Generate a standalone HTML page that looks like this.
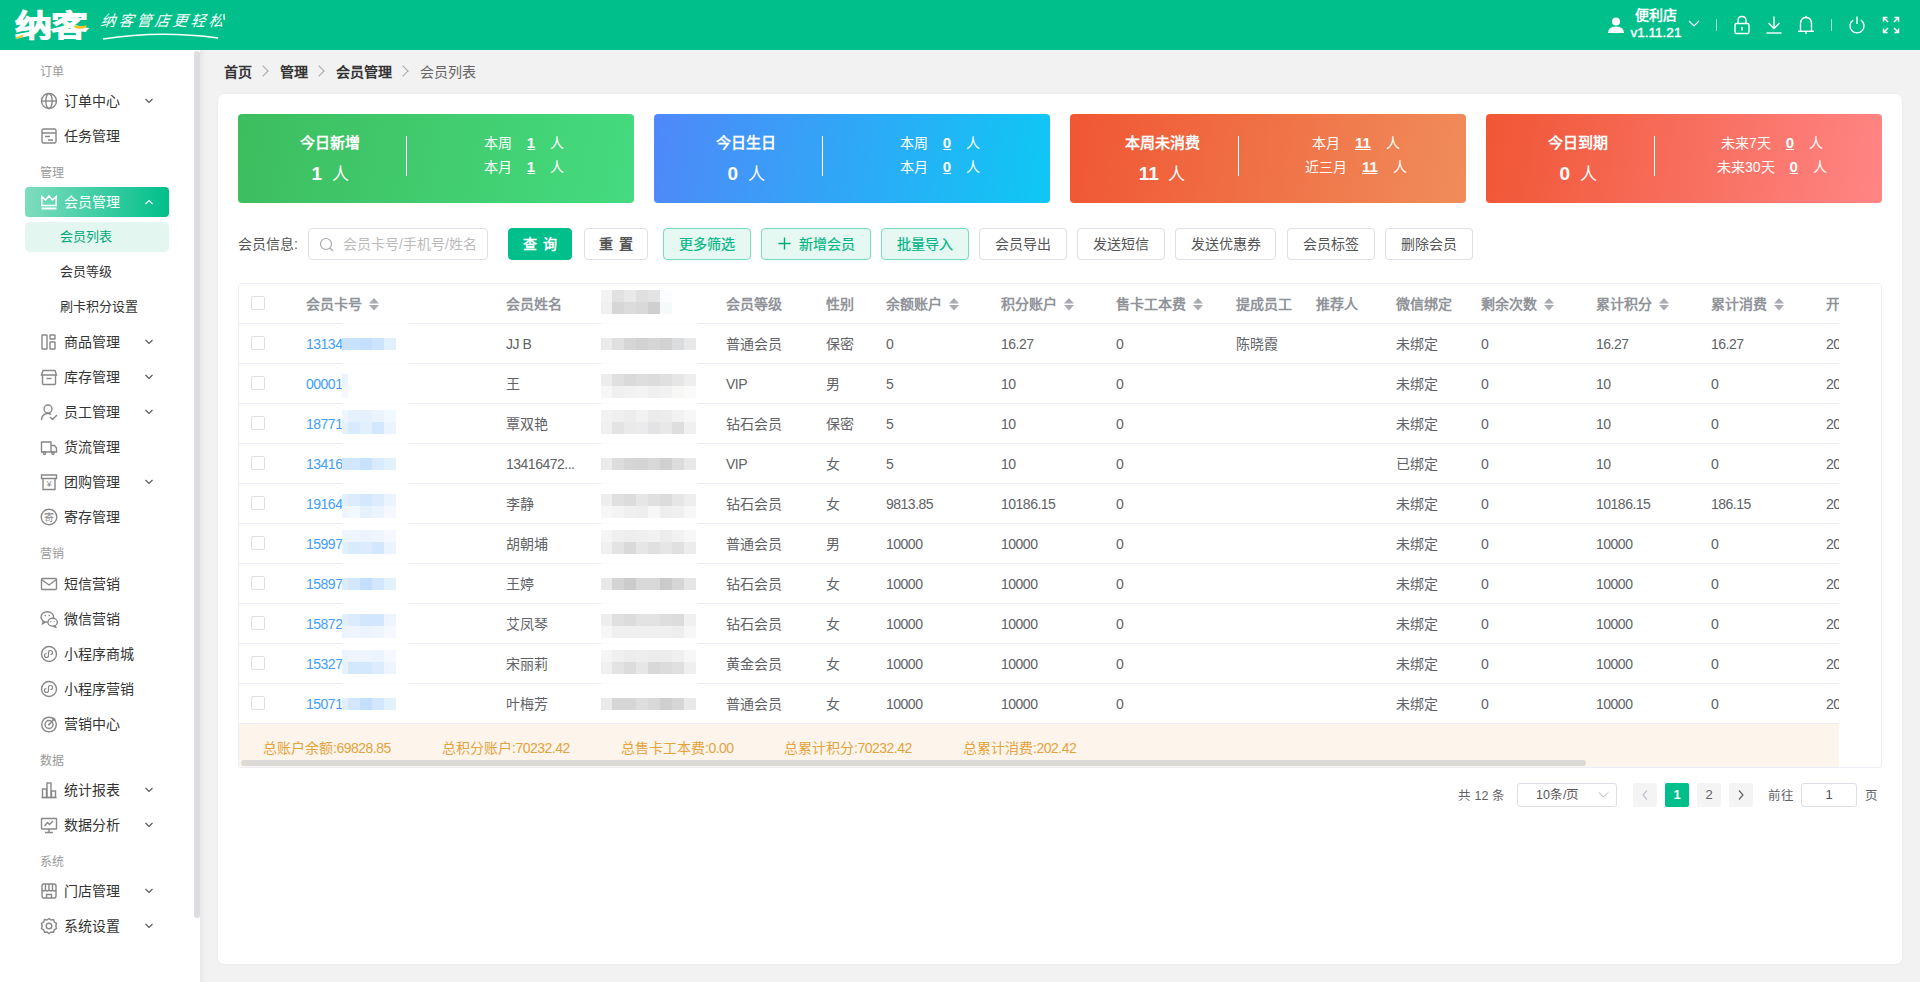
<!DOCTYPE html>
<html lang="zh-CN">
<head>
<meta charset="utf-8">
<style>
*{box-sizing:border-box;margin:0;padding:0}
html,body{width:1920px;height:982px;overflow:hidden;background:#f2f2f2;font-family:"Liberation Sans",sans-serif;font-size:14px;color:#333}
.abs{position:absolute}
#hdr{position:absolute;left:0;top:0;width:1920px;height:50px;background:#00bf8a}
#logo{position:absolute;left:15px;top:8px;font-size:35px;line-height:42px;font-weight:bold;color:#fff;letter-spacing:-1px;transform:scale(1.06,0.84);transform-origin:0 0;-webkit-text-stroke:1.2px #fff}
#slogan{position:absolute;left:101px;top:11px;font-size:15px;line-height:20px;color:#fff;font-family:"Liberation Serif",serif;font-style:italic;letter-spacing:3px;transform:skewX(-8deg)}
#mainbg{position:absolute;left:200px;top:50px;width:1720px;height:932px;background:linear-gradient(90deg,#e8e8e8,#f2f2f2 6px)}
#side{position:absolute;left:0;top:50px;width:200px;height:932px;background:#fff}
#sthumb{position:absolute;left:194px;top:51px;width:6px;height:867px;background:#dcdde0;border-radius:3px}
.grp{position:absolute;left:40px;font-size:12px;color:#999;line-height:16px}
.item{position:absolute;left:40px;width:130px;height:20px;line-height:20px;font-size:14px;color:#333}
.item .ic,#act .ic{position:absolute;left:0;top:1px;width:18px;height:18px}
.item .tx,#act .tx{position:absolute;left:24px;top:0}
.item .ar,#act .ar{position:absolute;left:104px;top:6px;width:10px;height:8px}
#act{position:absolute;left:25px;top:187px;width:144px;height:30px;border-radius:4px;background:linear-gradient(90deg,#7fdcbe,#00bf8a);color:#fff;font-size:14px;line-height:20px}
#act .ic{left:15px;top:6px}#act .tx{left:39px;top:5px}#act .ar{left:119px;top:11px}
#subact{position:absolute;left:25px;top:222px;width:144px;height:30px;border-radius:5px;background:#e3f7f0;color:#00a877;font-size:13px;line-height:30px;padding-left:35px}
.sub{position:absolute;left:60px;font-size:13px;color:#333;line-height:20px}
#bc{position:absolute;left:224px;top:62px;font-size:14px;line-height:20px;color:#333}
#bc b{font-weight:bold}
#bc .sep{display:inline-block;width:8px;height:8px;border-right:1px solid #aaa;border-top:1px solid #aaa;transform:rotate(45deg);margin:0 13px 2px 7px}
#card{position:absolute;left:218px;top:94px;width:1684px;height:870px;background:#fff;border-radius:6px;box-shadow:0 0 3px rgba(0,0,0,.06)}
.stat{position:absolute;top:114px;width:396px;height:89px;border-radius:4px;color:#fff}
.stat .t1{position:absolute;width:184px;left:0;top:19px;text-align:center;font-weight:bold;font-size:15px;line-height:20px}
.stat .t2{position:absolute;width:184px;left:0;top:49px;text-align:center;font-size:17px;line-height:22px}
.stat .t2 b{font-weight:bold;font-size:19px}
.stat .dv{position:absolute;left:168px;top:22px;width:1px;height:40px;background:#fff}
.stat .r{position:absolute;left:180px;width:212px;text-align:center;font-size:14px;line-height:20px;margin-top:1px}
.stat .r u{font-weight:bold;margin:0 15px;font-size:15px}
.btn{position:absolute;top:228px;height:32px;border:1px solid #dcdfe6;border-radius:4px;background:#fff;font-size:14px;line-height:30px;text-align:center;color:#555}
.btn.pri{background:#00bf8a;border-color:#00bf8a;color:#fff;font-weight:bold;letter-spacing:6px;text-indent:6px}
.btn.rs{font-weight:bold;letter-spacing:6px;text-indent:6px}
.btn.lt{background:#e6f8f2;border-color:#78dcc0;color:#00b585;-webkit-text-stroke:0.2px #00b585;line-height:30px}
.btn .plus{margin-right:8px;vertical-align:-1px}
#tbl{position:absolute;left:238px;top:283px;width:1644px;height:485px;border:1px solid #ebeef5;border-radius:3px;overflow:hidden;background:#fff}
.row{position:absolute;left:0;width:1600px;height:40px;border-bottom:1px solid #ebeef5;font-size:14px;color:#606266;overflow:hidden}
em.n{font-style:normal;letter-spacing:-0.5px}
.row span{position:absolute;top:1px;line-height:39px;white-space:nowrap}
.row span.lk{color:#409eff}
.hrow span{font-weight:bold;color:#909399}
.so{margin-left:7px;vertical-align:-2px}
.cb{position:absolute;left:12px;top:12px;width:14px;height:14px;border:1px solid #dcdfe6;border-radius:2px;background:#fff}
.blur{position:absolute}
#sum{position:absolute;left:0;top:440px;width:1600px;height:44px;background:#fdf5ec}
#sum span{position:absolute;top:14px;line-height:20px;font-size:14px;color:#e6a23c;white-space:nowrap}
#hscroll{position:absolute;left:2px;top:476px;width:1345px;height:6px;border-radius:3px;background:#dcdad6}
.pg{position:absolute;font-size:12.5px;line-height:18px;color:#606266}
.pgb{position:absolute;top:783px;width:24px;height:24px;border-radius:2px;background:#f4f4f5;text-align:center;line-height:24px;font-size:13px;color:#606266}
.pgb.act{background:#00bf8a;color:#fff;font-weight:bold}

</style>
</head>
<body>
<div id="hdr">
<div id="logo">纳客</div>
<div id="slogan">纳客管店更轻松</div>
<svg class="abs" style="left:14px;top:22px" width="74" height="18" viewBox="0 0 74 18"><path d="M1.5 15.5 Q6 14 9.5 12.5 L8.5 15 Q5 16.5 1.5 16.5 Z" fill="#f5c21a"/><path d="M60 3 Q66 5.5 72.5 3 L72 5.5 Q66 8 60.5 5.5 Z" fill="#f5c21a"/></svg>
<svg class="abs" style="left:100px;top:30px" width="130" height="12" viewBox="0 0 130 12"><path d="M3 9 Q60 0 118 8" stroke="#fff" stroke-width="1.3" fill="none"/></svg>
<svg class="abs" style="left:1607px;top:16px" width="18" height="18" viewBox="0 0 18 18"><circle cx="9" cy="5.5" r="4" fill="#fff"/><path d="M1 17 Q1 10.5 9 10.5 Q17 10.5 17 17 Z" fill="#fff"/></svg>
<div class="abs" style="left:1628px;top:7px;width:56px;text-align:center;color:#fff;font-size:14px;line-height:17px;font-weight:bold">便利店</div><div class="abs" style="left:1628px;top:25px;width:56px;text-align:center;color:#fff;font-size:13.5px;line-height:16px;-webkit-text-stroke:0.4px #fff">v1.11.21</div>
<svg class="abs" style="left:1688px;top:20px" width="12" height="8" viewBox="0 0 12 8"><path d="M1 1 L6 6 L11 1" stroke="#fff" stroke-width="1.2" fill="none"/></svg>
<div class="abs" style="left:1716px;top:19px;width:1px;height:12px;background:rgba(255,255,255,.6)"></div>
<div class="abs" style="left:1831px;top:19px;width:1px;height:12px;background:rgba(255,255,255,.6)"></div>
<svg class="abs" style="left:1733px;top:15px" width="18" height="20" viewBox="0 0 18 20"><rect x="2" y="8.5" width="14" height="10" rx="1.5" stroke="#fff" stroke-width="1.4" fill="none"/><path d="M5 8.5 V5.5 Q5 1.5 9 1.5 Q13 1.5 13 5.5 V8.5" stroke="#fff" stroke-width="1.4" fill="none"/><path d="M9 12 V15.5" stroke="#fff" stroke-width="1.6"/></svg>
<svg class="abs" style="left:1765px;top:15px" width="18" height="20" viewBox="0 0 18 20"><path d="M9 1.5 V13 M3.5 8 L9 13.5 L14.5 8" stroke="#fff" stroke-width="1.4" fill="none"/><path d="M1.5 18 H16.5" stroke="#fff" stroke-width="1.4"/></svg>
<svg class="abs" style="left:1797px;top:15px" width="18" height="20" viewBox="0 0 18 20"><path d="M3.5 16 V9 Q3.5 2.5 9 2.5 Q14.5 2.5 14.5 9 V16" stroke="#fff" stroke-width="1.4" fill="none"/><path d="M1 16.3 H17" stroke="#fff" stroke-width="1.4"/><circle cx="9" cy="1.8" r="1" fill="#fff"/><path d="M8 18 H10" stroke="#fff" stroke-width="1.6"/></svg>
<svg class="abs" style="left:1848px;top:15px" width="18" height="20" viewBox="0 0 18 20"><path d="M5.2 5 A7 7 0 1 0 12.8 5" stroke="#fff" stroke-width="1.4" fill="none"/><path d="M9 1.5 V9" stroke="#fff" stroke-width="1.4"/></svg>
<svg class="abs" style="left:1882px;top:16px" width="18" height="18" viewBox="0 0 18 18"><g stroke="#fff" stroke-width="1.5" fill="none"><path d="M1.5 5.5 V1.5 H5.5 M1.5 1.5 L6 6"/><path d="M16.5 5.5 V1.5 H12.5 M16.5 1.5 L12 6"/><path d="M1.5 12.5 V16.5 H5.5 M1.5 16.5 L6 12"/><path d="M16.5 12.5 V16.5 H12.5 M16.5 16.5 L12 12"/></g></svg>
</div>
<div id="mainbg"></div><div id="side"></div><div id="sthumb"></div>
<div class="grp" style="top:64px">订单</div>
<div class="item" style="top:91px"><svg class="ic" viewBox="0 0 18 18"><circle cx="9" cy="9" r="7.5" stroke="#888" stroke-width="1.4" fill="none"/><ellipse cx="9" cy="9" rx="3.2" ry="7.5" stroke="#888" stroke-width="1.4" fill="none"/><path d="M1.5 9 H16.5" stroke="#888" stroke-width="1.4" fill="none"/></svg><span class="tx">订单中心</span><svg class="ar" viewBox="0 0 10 8"><path d="M1.5 2 L5 5.5 L8.5 2" stroke="#555" stroke-width="1.1" fill="none"/></svg></div>
<div class="item" style="top:126px"><svg class="ic" viewBox="0 0 18 18"><rect x="2" y="2" width="14" height="14" rx="1.5" stroke="#888" stroke-width="1.4" fill="none"/><path d="M2 6 H16 M5 9.5 H10 M8 13 H13" stroke="#888" stroke-width="1.4" fill="none"/></svg><span class="tx">任务管理</span></div>
<div class="grp" style="top:165px">管理</div>
<div id="act"><svg class="ic" viewBox="0 0 18 18"><path d="M1.8 3.5 V12.5 H16.2 V3.5 L12.5 7 L9 3 L5.5 7 Z" stroke="#fff" stroke-width="1.5" fill="none" stroke-linejoin="miter"/><path d="M1.5 15.5 H16.5" stroke="#fff" stroke-width="2"/></svg><span class="tx">会员管理</span><svg class="ar" viewBox="0 0 10 8"><path d="M1.5 6 L5 2.5 L8.5 6" stroke="#fff" stroke-width="1.1" fill="none"/></svg></div>
<div id="subact">会员列表</div>
<div class="sub" style="top:262px">会员等级</div>
<div class="sub" style="top:297px">刷卡积分设置</div>
<div class="item" style="top:332px"><svg class="ic" viewBox="0 0 18 18"><rect x="2" y="2" width="5" height="14" rx="0.5" stroke="#888" stroke-width="1.4" fill="none"/><rect x="10" y="2" width="5" height="4" rx="0.5" stroke="#888" stroke-width="1.4" fill="none"/><rect x="10" y="9" width="5" height="7" rx="0.5" stroke="#888" stroke-width="1.4" fill="none"/></svg><span class="tx">商品管理</span><svg class="ar" viewBox="0 0 10 8"><path d="M1.5 2 L5 5.5 L8.5 2" stroke="#555" stroke-width="1.1" fill="none"/></svg></div>
<div class="item" style="top:367px"><svg class="ic" viewBox="0 0 18 18"><path d="M2.5 7 V15.5 Q2.5 16.5 3.5 16.5 H14.5 Q15.5 16.5 15.5 15.5 V7" stroke="#888" stroke-width="1.4" fill="none"/><path d="M3 2.5 H15 L16.5 7 H1.5 Z" stroke="#888" stroke-width="1.4" fill="none"/><path d="M6.5 10.5 H11.5" stroke="#888" stroke-width="1.4" fill="none"/></svg><span class="tx">库存管理</span><svg class="ar" viewBox="0 0 10 8"><path d="M1.5 2 L5 5.5 L8.5 2" stroke="#555" stroke-width="1.1" fill="none"/></svg></div>
<div class="item" style="top:402px"><svg class="ic" viewBox="0 0 18 18"><circle cx="8" cy="6" r="4" stroke="#888" stroke-width="1.4" fill="none"/><path d="M1.5 17 Q2 10.5 8 10.5 Q10 10.5 11 11.5" stroke="#888" stroke-width="1.4" fill="none"/><path d="M10 14 L12.5 16.5 L17 12" stroke="#888" stroke-width="1.4" fill="none"/></svg><span class="tx">员工管理</span><svg class="ar" viewBox="0 0 10 8"><path d="M1.5 2 L5 5.5 L8.5 2" stroke="#555" stroke-width="1.1" fill="none"/></svg></div>
<div class="item" style="top:437px"><svg class="ic" viewBox="0 0 18 18"><path d="M1.5 4 H11 V14 H1.5 Z" stroke="#888" stroke-width="1.4" fill="none"/><path d="M11 7.5 H14.5 L16.5 10 V14 H11" stroke="#888" stroke-width="1.4" fill="none"/><circle cx="4.5" cy="15" r="1.2" stroke="#888" stroke-width="1.4" fill="none"/><circle cx="13" cy="15" r="1.2" stroke="#888" stroke-width="1.4" fill="none"/></svg><span class="tx">货流管理</span></div>
<div class="item" style="top:472px"><svg class="ic" viewBox="0 0 18 18"><path d="M1.5 2 H16.5 V5.5 H1.5 Z" stroke="#888" stroke-width="1.4" fill="none"/><path d="M3 5.5 V16.5 H15 V5.5" stroke="#888" stroke-width="1.4" fill="none"/><text x="9" y="14" text-anchor="middle" font-size="8.5" fill="#888">¥</text></svg><span class="tx">团购管理</span><svg class="ar" viewBox="0 0 10 8"><path d="M1.5 2 L5 5.5 L8.5 2" stroke="#555" stroke-width="1.1" fill="none"/></svg></div>
<div class="item" style="top:507px"><svg class="ic" viewBox="0 0 18 18"><circle cx="9" cy="9" r="7.8" stroke="#888" stroke-width="1.4" fill="none"/><text x="9" y="12.6" text-anchor="middle" font-size="10" fill="#888">寄</text></svg><span class="tx">寄存管理</span></div>
<div class="grp" style="top:546px">营销</div>
<div class="item" style="top:574px"><svg class="ic" viewBox="0 0 18 18"><rect x="1.5" y="3.5" width="15" height="11" rx="1" stroke="#888" stroke-width="1.4" fill="none"/><path d="M1.5 4.5 L9 10 L16.5 4.5" stroke="#888" stroke-width="1.4" fill="none"/></svg><span class="tx">短信营销</span></div>
<div class="item" style="top:609px"><svg class="ic" viewBox="0 0 18 18"><ellipse cx="7.3" cy="7" rx="6.3" ry="5.2" stroke="#888" stroke-width="1.4" fill="none"/><path d="M3.3 11 L2.6 13.8 L5.6 12" stroke="#888" stroke-width="1.4" fill="none"/><circle cx="5.2" cy="5.6" r="0.8" fill="#888"/><circle cx="9.2" cy="5.6" r="0.8" fill="#888"/><ellipse cx="12.6" cy="12.2" rx="4.7" ry="3.9" fill="#fff" stroke="#888" stroke-width="1.4"/><path d="M14.8 15.6 L15.8 17.3 L12.8 16.1" stroke="#888" stroke-width="1.4" fill="none"/><circle cx="11" cy="11.6" r="0.7" fill="#888"/><circle cx="14.2" cy="11.6" r="0.7" fill="#888"/></svg><span class="tx">微信营销</span></div>
<div class="item" style="top:644px"><svg class="ic" viewBox="0 0 18 18"><circle cx="9" cy="9" r="7.5" stroke="#888" stroke-width="1.4" fill="none"/><path d="M6.5 12.5 Q4.5 12.5 4.5 10.5 Q4.5 8.5 6.5 8.5 M6.5 12.5 Q8.5 12.5 8.5 10.5 V7.5 Q8.5 5.5 10.5 5.5 Q12.5 5.5 12.5 7.5 Q12.5 9.5 10.5 9.5" stroke="#888" stroke-width="1.2" fill="none"/></svg><span class="tx">小程序商城</span></div>
<div class="item" style="top:679px"><svg class="ic" viewBox="0 0 18 18"><circle cx="9" cy="9" r="7.5" stroke="#888" stroke-width="1.4" fill="none"/><path d="M6.5 12.5 Q4.5 12.5 4.5 10.5 Q4.5 8.5 6.5 8.5 M6.5 12.5 Q8.5 12.5 8.5 10.5 V7.5 Q8.5 5.5 10.5 5.5 Q12.5 5.5 12.5 7.5 Q12.5 9.5 10.5 9.5" stroke="#888" stroke-width="1.2" fill="none"/></svg><span class="tx">小程序营销</span></div>
<div class="item" style="top:714px"><svg class="ic" viewBox="0 0 18 18"><circle cx="9" cy="9.5" r="7.3" stroke="#888" stroke-width="1.4" fill="none"/><circle cx="9" cy="9.5" r="4" stroke="#888" stroke-width="1.4" fill="none"/><circle cx="9" cy="9.5" r="1" fill="#888"/><path d="M9 9.5 L15 3.5 M13 2.5 V5 H15.5" stroke="#888" stroke-width="1.4" fill="none"/></svg><span class="tx">营销中心</span></div>
<div class="grp" style="top:753px">数据</div>
<div class="item" style="top:780px"><svg class="ic" viewBox="0 0 18 18"><path d="M1.5 16.5 H16.5" stroke="#888" stroke-width="1.4" fill="none"/><rect x="2.5" y="8" width="4" height="8.5" stroke="#888" stroke-width="1.4" fill="none"/><rect x="7" y="2" width="4" height="14.5" stroke="#888" stroke-width="1.4" fill="none"/><rect x="11.5" y="10" width="4" height="6.5" stroke="#888" stroke-width="1.4" fill="none"/></svg><span class="tx">统计报表</span><svg class="ar" viewBox="0 0 10 8"><path d="M1.5 2 L5 5.5 L8.5 2" stroke="#555" stroke-width="1.1" fill="none"/></svg></div>
<div class="item" style="top:815px"><svg class="ic" viewBox="0 0 18 18"><rect x="1.5" y="2.5" width="15" height="10.5" rx="0.5" stroke="#888" stroke-width="1.4" fill="none"/><path d="M9 13 V16.5 M5 16.5 H13 M4.5 10 L7.5 6.5 L9.5 8.5 L13 5" stroke="#888" stroke-width="1.4" fill="none"/></svg><span class="tx">数据分析</span><svg class="ar" viewBox="0 0 10 8"><path d="M1.5 2 L5 5.5 L8.5 2" stroke="#555" stroke-width="1.1" fill="none"/></svg></div>
<div class="grp" style="top:854px">系统</div>
<div class="item" style="top:881px"><svg class="ic" viewBox="0 0 18 18"><rect x="2" y="2" width="14" height="14" rx="2" stroke="#888" stroke-width="1.4" fill="none"/><path d="M2 8 Q3.75 10 5.5 8 Q7.25 10 9 8 Q10.75 10 12.5 8 Q14.25 10 16 8 M5.5 2 V8 M9 2 V8 M12.5 2 V8 M6.5 16 V12.5 H11.5 V16" stroke="#888" stroke-width="1.4" fill="none"/></svg><span class="tx">门店管理</span><svg class="ar" viewBox="0 0 10 8"><path d="M1.5 2 L5 5.5 L8.5 2" stroke="#555" stroke-width="1.1" fill="none"/></svg></div>
<div class="item" style="top:916px"><svg class="ic" viewBox="0 0 18 18"><path d="M9 1.5 L11 3 L13.5 2.6 L14.3 5 L16.5 6.3 L15.8 8.8 L16.5 11.5 L14.3 12.8 L13.5 15.3 L11 15 L9 16.5 L7 15 L4.5 15.3 L3.7 12.8 L1.5 11.5 L2.2 9 L1.5 6.3 L3.7 5 L4.5 2.6 L7 3 Z" stroke="#888" stroke-width="1.4" fill="none"/><circle cx="9" cy="9" r="2.8" stroke="#888" stroke-width="1.4" fill="none"/></svg><span class="tx">系统设置</span><svg class="ar" viewBox="0 0 10 8"><path d="M1.5 2 L5 5.5 L8.5 2" stroke="#555" stroke-width="1.1" fill="none"/></svg></div>
<div id="bc"><b>首页</b><i class="sep"></i><b>管理</b><i class="sep"></i><b>会员管理</b><i class="sep"></i><span style="color:#666">会员列表</span></div>
<div id="card"></div>
<div class="stat" style="left:238px;background:linear-gradient(100deg,#3dbd5e,#45db80)"><div class="t1">今日新增</div><div class="t2"><b>1</b>&nbsp;&nbsp;人</div><div class="dv"></div>
<div class="r" style="top:18px">本周<u>1</u>人</div>
<div class="r" style="top:42px">本月<u>1</u>人</div>
</div>
<div class="stat" style="left:654px;background:linear-gradient(100deg,#5088f9,#0ec8f4)"><div class="t1">今日生日</div><div class="t2"><b>0</b>&nbsp;&nbsp;人</div><div class="dv"></div>
<div class="r" style="top:18px">本周<u>0</u>人</div>
<div class="r" style="top:42px">本月<u>0</u>人</div>
</div>
<div class="stat" style="left:1070px;background:linear-gradient(100deg,#f05634,#f08d5a)"><div class="t1">本周未消费</div><div class="t2"><b>11</b>&nbsp;&nbsp;人</div><div class="dv"></div>
<div class="r" style="top:18px">本月<u>11</u>人</div>
<div class="r" style="top:42px">近三月<u>11</u>人</div>
</div>
<div class="stat" style="left:1486px;background:linear-gradient(100deg,#f05634,#ff8585)"><div class="t1">今日到期</div><div class="t2"><b>0</b>&nbsp;&nbsp;人</div><div class="dv"></div>
<div class="r" style="top:18px">未来7天<u>0</u>人</div>
<div class="r" style="top:42px">未来30天<u>0</u>人</div>
</div>
<div class="abs" style="left:238px;top:234px;font-size:14px;line-height:20px;color:#555">会员信息:</div>
<div class="abs" style="left:308px;top:228px;width:180px;height:32px;border:1px solid #dcdfe6;border-radius:4px"><svg class="abs" style="left:10px;top:8px" width="16" height="16" viewBox="0 0 16 16"><circle cx="7" cy="7" r="5.5" stroke="#aaa" stroke-width="1.2" fill="none"/><path d="M11 11 L14 14" stroke="#aaa" stroke-width="1.2"/></svg><span class="abs" style="left:34px;top:5px;line-height:20px;color:#bbb;font-size:14px;white-space:nowrap">会员卡号/手机号/姓名</span></div>
<div class="btn pri" style="left:508px;width:64px">查询</div>
<div class="btn rs" style="left:584px;width:64px">重置</div>
<div class="btn lt" style="left:663px;width:88px">更多筛选</div>
<div class="btn lt" style="left:761px;width:110px"><svg class="plus" width="13" height="13" viewBox="0 0 13 13"><path d="M6.5 0.5 V12.5 M0.5 6.5 H12.5" stroke="#00a877" stroke-width="1.4"/></svg>新增会员</div>
<div class="btn lt" style="left:881px;width:88px">批量导入</div>
<div class="btn " style="left:979px;width:88px">会员导出</div>
<div class="btn " style="left:1077px;width:88px">发送短信</div>
<div class="btn " style="left:1175px;width:101px">发送优惠券</div>
<div class="btn " style="left:1287px;width:88px">会员标签</div>
<div class="btn " style="left:1385px;width:88px">删除会员</div>
<div id="tbl">
<div class="row hrow" style="top:0"><i class="cb"></i>
<span style="left:67px">会员卡号<svg class="so" width="10" height="13" viewBox="0 0 10 13"><path d="M5 0 L10 5.6 H0 Z M0 7 H10 L5 12.6 Z" fill="#a8abb2"/></svg></span>
<span style="left:267px">会员姓名</span>
<span style="left:487px">会员等级</span>
<span style="left:587px">性别</span>
<span style="left:647px">余额账户<svg class="so" width="10" height="13" viewBox="0 0 10 13"><path d="M5 0 L10 5.6 H0 Z M0 7 H10 L5 12.6 Z" fill="#a8abb2"/></svg></span>
<span style="left:762px">积分账户<svg class="so" width="10" height="13" viewBox="0 0 10 13"><path d="M5 0 L10 5.6 H0 Z M0 7 H10 L5 12.6 Z" fill="#a8abb2"/></svg></span>
<span style="left:877px">售卡工本费<svg class="so" width="10" height="13" viewBox="0 0 10 13"><path d="M5 0 L10 5.6 H0 Z M0 7 H10 L5 12.6 Z" fill="#a8abb2"/></svg></span>
<span style="left:997px">提成员工</span>
<span style="left:1077px">推荐人</span>
<span style="left:1157px">微信绑定</span>
<span style="left:1242px">剩余次数<svg class="so" width="10" height="13" viewBox="0 0 10 13"><path d="M5 0 L10 5.6 H0 Z M0 7 H10 L5 12.6 Z" fill="#a8abb2"/></svg></span>
<span style="left:1357px">累计积分<svg class="so" width="10" height="13" viewBox="0 0 10 13"><path d="M5 0 L10 5.6 H0 Z M0 7 H10 L5 12.6 Z" fill="#a8abb2"/></svg></span>
<span style="left:1472px">累计消费<svg class="so" width="10" height="13" viewBox="0 0 10 13"><path d="M5 0 L10 5.6 H0 Z M0 7 H10 L5 12.6 Z" fill="#a8abb2"/></svg></span>
<span style="left:1587px">开</span>
</div>
<div class="row" style="top:40px"><i class="cb"></i>
<span class="lk" style="left:67px"><em class="n">13134</em></span>
<span style="left:267px"><em class="n">JJ B</em></span>
<span style="left:487px">普通会员</span>
<span style="left:587px">保密</span>
<span style="left:647px"><em class="n">0</em></span>
<span style="left:762px"><em class="n">16.27</em></span>
<span style="left:877px"><em class="n">0</em></span>
<span style="left:997px">陈晓霞</span>
<span style="left:1157px">未绑定</span>
<span style="left:1242px"><em class="n">0</em></span>
<span style="left:1357px"><em class="n">16.27</em></span>
<span style="left:1472px"><em class="n">16.27</em></span>
<span style="left:1587px"><em class="n">20</em></span>
</div>
<div class="row" style="top:80px"><i class="cb"></i>
<span class="lk" style="left:67px"><em class="n">00001</em></span>
<span style="left:267px">王</span>
<span style="left:487px"><em class="n">VIP</em></span>
<span style="left:587px">男</span>
<span style="left:647px"><em class="n">5</em></span>
<span style="left:762px"><em class="n">10</em></span>
<span style="left:877px"><em class="n">0</em></span>
<span style="left:1157px">未绑定</span>
<span style="left:1242px"><em class="n">0</em></span>
<span style="left:1357px"><em class="n">10</em></span>
<span style="left:1472px"><em class="n">0</em></span>
<span style="left:1587px"><em class="n">20</em></span>
</div>
<div class="row" style="top:120px"><i class="cb"></i>
<span class="lk" style="left:67px"><em class="n">18771</em></span>
<span style="left:267px">覃双艳</span>
<span style="left:487px">钻石会员</span>
<span style="left:587px">保密</span>
<span style="left:647px"><em class="n">5</em></span>
<span style="left:762px"><em class="n">10</em></span>
<span style="left:877px"><em class="n">0</em></span>
<span style="left:1157px">未绑定</span>
<span style="left:1242px"><em class="n">0</em></span>
<span style="left:1357px"><em class="n">10</em></span>
<span style="left:1472px"><em class="n">0</em></span>
<span style="left:1587px"><em class="n">20</em></span>
</div>
<div class="row" style="top:160px"><i class="cb"></i>
<span class="lk" style="left:67px"><em class="n">13416</em></span>
<span style="left:267px"><em class="n">13416472...</em></span>
<span style="left:487px"><em class="n">VIP</em></span>
<span style="left:587px">女</span>
<span style="left:647px"><em class="n">5</em></span>
<span style="left:762px"><em class="n">10</em></span>
<span style="left:877px"><em class="n">0</em></span>
<span style="left:1157px">已绑定</span>
<span style="left:1242px"><em class="n">0</em></span>
<span style="left:1357px"><em class="n">10</em></span>
<span style="left:1472px"><em class="n">0</em></span>
<span style="left:1587px"><em class="n">20</em></span>
</div>
<div class="row" style="top:200px"><i class="cb"></i>
<span class="lk" style="left:67px"><em class="n">19164</em></span>
<span style="left:267px">李静</span>
<span style="left:487px">钻石会员</span>
<span style="left:587px">女</span>
<span style="left:647px"><em class="n">9813.85</em></span>
<span style="left:762px"><em class="n">10186.15</em></span>
<span style="left:877px"><em class="n">0</em></span>
<span style="left:1157px">未绑定</span>
<span style="left:1242px"><em class="n">0</em></span>
<span style="left:1357px"><em class="n">10186.15</em></span>
<span style="left:1472px"><em class="n">186.15</em></span>
<span style="left:1587px"><em class="n">20</em></span>
</div>
<div class="row" style="top:240px"><i class="cb"></i>
<span class="lk" style="left:67px"><em class="n">15997</em></span>
<span style="left:267px">胡朝埔</span>
<span style="left:487px">普通会员</span>
<span style="left:587px">男</span>
<span style="left:647px"><em class="n">10000</em></span>
<span style="left:762px"><em class="n">10000</em></span>
<span style="left:877px"><em class="n">0</em></span>
<span style="left:1157px">未绑定</span>
<span style="left:1242px"><em class="n">0</em></span>
<span style="left:1357px"><em class="n">10000</em></span>
<span style="left:1472px"><em class="n">0</em></span>
<span style="left:1587px"><em class="n">20</em></span>
</div>
<div class="row" style="top:280px"><i class="cb"></i>
<span class="lk" style="left:67px"><em class="n">15897</em></span>
<span style="left:267px">王婷</span>
<span style="left:487px">钻石会员</span>
<span style="left:587px">女</span>
<span style="left:647px"><em class="n">10000</em></span>
<span style="left:762px"><em class="n">10000</em></span>
<span style="left:877px"><em class="n">0</em></span>
<span style="left:1157px">未绑定</span>
<span style="left:1242px"><em class="n">0</em></span>
<span style="left:1357px"><em class="n">10000</em></span>
<span style="left:1472px"><em class="n">0</em></span>
<span style="left:1587px"><em class="n">20</em></span>
</div>
<div class="row" style="top:320px"><i class="cb"></i>
<span class="lk" style="left:67px"><em class="n">15872</em></span>
<span style="left:267px">艾凤琴</span>
<span style="left:487px">钻石会员</span>
<span style="left:587px">女</span>
<span style="left:647px"><em class="n">10000</em></span>
<span style="left:762px"><em class="n">10000</em></span>
<span style="left:877px"><em class="n">0</em></span>
<span style="left:1157px">未绑定</span>
<span style="left:1242px"><em class="n">0</em></span>
<span style="left:1357px"><em class="n">10000</em></span>
<span style="left:1472px"><em class="n">0</em></span>
<span style="left:1587px"><em class="n">20</em></span>
</div>
<div class="row" style="top:360px"><i class="cb"></i>
<span class="lk" style="left:67px"><em class="n">15327</em></span>
<span style="left:267px">宋丽莉</span>
<span style="left:487px">黄金会员</span>
<span style="left:587px">女</span>
<span style="left:647px"><em class="n">10000</em></span>
<span style="left:762px"><em class="n">10000</em></span>
<span style="left:877px"><em class="n">0</em></span>
<span style="left:1157px">未绑定</span>
<span style="left:1242px"><em class="n">0</em></span>
<span style="left:1357px"><em class="n">10000</em></span>
<span style="left:1472px"><em class="n">0</em></span>
<span style="left:1587px"><em class="n">20</em></span>
</div>
<div class="row" style="top:400px"><i class="cb"></i>
<span class="lk" style="left:67px"><em class="n">15071</em></span>
<span style="left:267px">叶梅芳</span>
<span style="left:487px">普通会员</span>
<span style="left:587px">女</span>
<span style="left:647px"><em class="n">10000</em></span>
<span style="left:762px"><em class="n">10000</em></span>
<span style="left:877px"><em class="n">0</em></span>
<span style="left:1157px">未绑定</span>
<span style="left:1242px"><em class="n">0</em></span>
<span style="left:1357px"><em class="n">10000</em></span>
<span style="left:1472px"><em class="n">0</em></span>
<span style="left:1587px"><em class="n">20</em></span>
</div>
<div class="blur" style="left:103px;top:39px;width:66px;height:1px;background:#fcfcfd"></div>
<div class="blur" style="left:362px;top:39px;width:97px;height:1px;background:#fcfcfd"></div>
<div class="blur" style="left:103px;top:79px;width:66px;height:1px;background:#fcfcfd"></div>
<div class="blur" style="left:362px;top:79px;width:97px;height:1px;background:#fcfcfd"></div>
<div class="blur" style="left:103px;top:119px;width:66px;height:1px;background:#fcfcfd"></div>
<div class="blur" style="left:362px;top:119px;width:97px;height:1px;background:#fcfcfd"></div>
<div class="blur" style="left:103px;top:159px;width:66px;height:1px;background:#fcfcfd"></div>
<div class="blur" style="left:362px;top:159px;width:97px;height:1px;background:#fcfcfd"></div>
<div class="blur" style="left:103px;top:199px;width:66px;height:1px;background:#fcfcfd"></div>
<div class="blur" style="left:362px;top:199px;width:97px;height:1px;background:#fcfcfd"></div>
<div class="blur" style="left:103px;top:239px;width:66px;height:1px;background:#fcfcfd"></div>
<div class="blur" style="left:362px;top:239px;width:97px;height:1px;background:#fcfcfd"></div>
<div class="blur" style="left:103px;top:279px;width:66px;height:1px;background:#fcfcfd"></div>
<div class="blur" style="left:362px;top:279px;width:97px;height:1px;background:#fcfcfd"></div>
<div class="blur" style="left:103px;top:319px;width:66px;height:1px;background:#fcfcfd"></div>
<div class="blur" style="left:362px;top:319px;width:97px;height:1px;background:#fcfcfd"></div>
<div class="blur" style="left:103px;top:359px;width:66px;height:1px;background:#fcfcfd"></div>
<div class="blur" style="left:362px;top:359px;width:97px;height:1px;background:#fcfcfd"></div>
<div class="blur" style="left:103px;top:399px;width:66px;height:1px;background:#fcfcfd"></div>
<div class="blur" style="left:362px;top:399px;width:97px;height:1px;background:#fcfcfd"></div>
<div class="blur" style="left:103px;top:54px;width:54px;height:12px;background:linear-gradient(90deg,#c8e1fc 0px 6px,#c8e1fc 6px 18px,#c4dffb 18px 30px,#cce4fd 30px 42px,#e2effe 42px 54px)"></div>
<div class="blur" style="left:103px;top:90px;width:6px;height:12px;background:linear-gradient(90deg,#eaf3fe 0px 6px)"></div>
<div class="blur" style="left:103px;top:102px;width:6px;height:12px;background:linear-gradient(90deg,#f5f9ff 0px 6px)"></div>
<div class="blur" style="left:103px;top:126px;width:54px;height:12px;background:linear-gradient(90deg,#eef5fe 0px 6px,#e6f1fe 6px 18px,#e6f1fe 18px 30px,#eaf3fe 30px 42px,#f2f8ff 42px 54px)"></div>
<div class="blur" style="left:103px;top:138px;width:54px;height:12px;background:linear-gradient(90deg,#e6f1fe 0px 6px,#d8eafd 6px 18px,#e2effd 18px 30px,#d4e8fd 30px 42px,#eaf3fe 42px 54px)"></div>
<div class="blur" style="left:103px;top:174px;width:54px;height:12px;background:linear-gradient(90deg,#d2e7fd 0px 6px,#d2e7fd 6px 18px,#c8e1fc 18px 30px,#d8eafd 30px 42px,#e6f1fe 42px 54px)"></div>
<div class="blur" style="left:103px;top:210px;width:54px;height:12px;background:linear-gradient(90deg,#e2effd 0px 6px,#dcebfd 6px 18px,#d4e8fd 18px 30px,#dcebfd 30px 42px,#eaf3fe 42px 54px)"></div>
<div class="blur" style="left:103px;top:222px;width:54px;height:12px;background:linear-gradient(90deg,#eef5fe 0px 6px,#f2f8ff 6px 18px,#e6f1fe 18px 30px,#eaf3fe 30px 42px,#f5f9ff 42px 54px)"></div>
<div class="blur" style="left:103px;top:246px;width:54px;height:12px;background:linear-gradient(90deg,#eef5fe 0px 6px,#eef5fe 6px 18px,#eaf3fe 18px 30px,#eef5fe 30px 42px,#f5f9ff 42px 54px)"></div>
<div class="blur" style="left:103px;top:258px;width:54px;height:12px;background:linear-gradient(90deg,#e2effd 0px 6px,#d8eafd 6px 18px,#dcebfd 18px 30px,#d2e7fd 30px 42px,#eaf3fe 42px 54px)"></div>
<div class="blur" style="left:103px;top:294px;width:54px;height:12px;background:linear-gradient(90deg,#dcebfd 0px 6px,#d4e8fd 6px 18px,#c4dffb 18px 30px,#d2e7fd 30px 42px,#e6f1fe 42px 54px)"></div>
<div class="blur" style="left:103px;top:330px;width:54px;height:12px;background:linear-gradient(90deg,#e2effd 0px 6px,#dcebfd 6px 18px,#d2e7fd 18px 30px,#d2e7fd 30px 42px,#eef5fe 42px 54px)"></div>
<div class="blur" style="left:103px;top:342px;width:54px;height:12px;background:linear-gradient(90deg,#eaf3fe 0px 6px,#eef5fe 6px 18px,#eaf3fe 18px 30px,#eef5fe 30px 42px,#f5f9ff 42px 54px)"></div>
<div class="blur" style="left:103px;top:366px;width:54px;height:12px;background:linear-gradient(90deg,#eaf3fe 0px 6px,#eef5fe 6px 18px,#eef5fe 18px 30px,#eaf3fe 30px 42px,#f5f9ff 42px 54px)"></div>
<div class="blur" style="left:103px;top:378px;width:54px;height:12px;background:linear-gradient(90deg,#e6f1fe 0px 6px,#d4e8fd 6px 18px,#d4e8fd 18px 30px,#dcebfd 30px 42px,#eef5fe 42px 54px)"></div>
<div class="blur" style="left:103px;top:414px;width:54px;height:12px;background:linear-gradient(90deg,#e2effd 0px 6px,#d2e7fd 6px 18px,#c4dffb 18px 30px,#d2e7fd 30px 42px,#e6f1fe 42px 54px)"></div>
<div class="blur" style="left:362px;top:6px;width:71px;height:12px;background:linear-gradient(90deg,#f3f3f3 0px 11px,#e1e1e1 11px 23px,#e9e9ea 23px 35px,#dedfe0 35px 47px,#e4e4e4 47px 59px,#fbfcfd 59px 71px)"></div>
<div class="blur" style="left:362px;top:18px;width:71px;height:12px;background:linear-gradient(90deg,#f0f0f0 0px 11px,#d6d6d6 11px 23px,#dcdcdd 23px 35px,#d9d9da 35px 47px,#cfcfcf 47px 59px,#f5f9fa 59px 71px)"></div>
<div class="blur" style="left:362px;top:54px;width:95px;height:12px;background:linear-gradient(90deg,#ebebeb 0px 11px,#e0e0e0 11px 23px,#d6d6d6 23px 35px,#d2d2d2 35px 47px,#d6d6d8 47px 59px,#d2d2d2 59px 71px,#dadcde 71px 83px,#e8e8e8 83px 95px)"></div>
<div class="blur" style="left:362px;top:90px;width:95px;height:12px;background:linear-gradient(90deg,#ededed 0px 11px,#e0e0e0 11px 23px,#dadada 23px 35px,#dedede 35px 47px,#dcdcdc 47px 59px,#e0e0e0 59px 71px,#e6e6e6 71px 83px,#eeeeee 83px 95px)"></div>
<div class="blur" style="left:362px;top:102px;width:95px;height:12px;background:linear-gradient(90deg,#f7f7f7 0px 11px,#f0f0f0 11px 23px,#f2f2f3 23px 35px,#f4f4f4 35px 47px,#f0f0f0 47px 59px,#f2f2f2 59px 71px,#f7f7f5 71px 83px,#fafafa 83px 95px)"></div>
<div class="blur" style="left:362px;top:126px;width:95px;height:12px;background:linear-gradient(90deg,#f2f2f2 0px 11px,#efefef 11px 23px,#ececec 23px 35px,#f2f2f2 35px 47px,#ebebeb 47px 59px,#ececec 59px 71px,#f2f2f2 71px 83px,#f6f7f7 83px 95px)"></div>
<div class="blur" style="left:362px;top:138px;width:95px;height:12px;background:linear-gradient(90deg,#f0f0f0 0px 11px,#e3e3e3 11px 23px,#eaeaea 23px 35px,#ebebeb 35px 47px,#e3e3e5 47px 59px,#e8e8e8 59px 71px,#dedede 71px 83px,#f0f0f0 83px 95px)"></div>
<div class="blur" style="left:362px;top:174px;width:95px;height:12px;background:linear-gradient(90deg,#ebebeb 0px 11px,#dcdcdc 11px 23px,#d6d6d6 23px 35px,#d4d4d4 35px 47px,#d8d8d8 47px 59px,#d0d0d0 59px 71px,#dcdcdc 71px 83px,#e8e8e8 83px 95px)"></div>
<div class="blur" style="left:362px;top:210px;width:95px;height:12px;background:linear-gradient(90deg,#eeeeee 0px 11px,#e0e0e0 11px 23px,#dcdcdc 23px 35px,#e6e6e6 35px 47px,#e0e0e0 47px 59px,#dcdcdc 59px 71px,#e6e6e6 71px 83px,#eeeeee 83px 95px)"></div>
<div class="blur" style="left:362px;top:222px;width:95px;height:12px;background:linear-gradient(90deg,#f7f7f7 0px 11px,#f4f4f4 11px 23px,#f0f0f0 23px 35px,#eeeeee 35px 47px,#f7f7f7 47px 59px,#eeeeee 59px 71px,#f0f0f0 71px 83px,#f7f7f7 83px 95px)"></div>
<div class="blur" style="left:362px;top:246px;width:95px;height:12px;background:linear-gradient(90deg,#f5f5f5 0px 11px,#efefef 11px 23px,#ededed 23px 35px,#efefef 35px 47px,#f2f2f2 47px 59px,#ececec 59px 71px,#f2f2f2 71px 83px,#f7f7f7 83px 95px)"></div>
<div class="blur" style="left:362px;top:258px;width:95px;height:12px;background:linear-gradient(90deg,#f0f0f0 0px 11px,#e3e3e3 11px 23px,#d9d9d9 23px 35px,#e6e6e6 35px 47px,#e0e0e0 47px 59px,#e6e6e6 59px 71px,#e0e0e0 71px 83px,#ececec 83px 95px)"></div>
<div class="blur" style="left:362px;top:294px;width:95px;height:12px;background:linear-gradient(90deg,#e8e8e8 0px 11px,#d4d4d4 11px 23px,#cbcbcb 23px 35px,#d8d8d8 35px 47px,#d8d8d8 47px 59px,#cacaca 59px 71px,#d6d6d6 71px 83px,#e6e6e6 83px 95px)"></div>
<div class="blur" style="left:362px;top:330px;width:95px;height:12px;background:linear-gradient(90deg,#eeeeee 0px 11px,#e0e0e0 11px 23px,#dcdcdc 23px 35px,#e3e3e3 35px 47px,#e3e3e3 47px 59px,#dedede 59px 71px,#dcdcdc 71px 83px,#f0f0f0 83px 95px)"></div>
<div class="blur" style="left:362px;top:342px;width:95px;height:12px;background:linear-gradient(90deg,#f7f7f7 0px 11px,#f0f0f0 11px 23px,#f0f0f0 23px 35px,#f0f0f0 35px 47px,#f0f0f0 47px 59px,#f0f0f0 59px 71px,#ededed 71px 83px,#f7f7f7 83px 95px)"></div>
<div class="blur" style="left:362px;top:366px;width:95px;height:12px;background:linear-gradient(90deg,#f5f5f5 0px 11px,#f0f0f0 11px 23px,#ececec 23px 35px,#eeeeee 35px 47px,#ececec 47px 59px,#ececec 59px 71px,#efefef 71px 83px,#f7f7f7 83px 95px)"></div>
<div class="blur" style="left:362px;top:378px;width:95px;height:12px;background:linear-gradient(90deg,#f0f0f0 0px 11px,#e3e3e3 11px 23px,#dcdcdc 23px 35px,#e6e6e6 35px 47px,#d8d8d8 47px 59px,#dcdcdc 59px 71px,#e0e0e0 71px 83px,#efefef 83px 95px)"></div>
<div class="blur" style="left:362px;top:414px;width:95px;height:12px;background:linear-gradient(90deg,#eaeaea 0px 11px,#d6d6d6 11px 23px,#d6d6d6 23px 35px,#dedede 35px 47px,#d8d8d8 47px 59px,#cfcfcf 59px 71px,#d6d6d6 71px 83px,#e8e8e8 83px 95px)"></div>
<div id="sum">
<span style="left:24px">总账户余额<em class="n">:69828.85</em></span>
<span style="left:203px">总积分账户<em class="n">:70232.42</em></span>
<span style="left:382px">总售卡工本费<em class="n">:0.00</em></span>
<span style="left:545px">总累计积分<em class="n">:70232.42</em></span>
<span style="left:724px">总累计消费<em class="n">:202.42</em></span>
</div>
<div id="hscroll"></div>
</div>
<div class="pg" style="left:1458px;top:787px">共 12 条</div>
<div class="abs" style="left:1517px;top:783px;width:100px;height:24px;border:1px solid #dcdfe6;border-radius:3px"><span class="abs" style="left:18px;top:2px;line-height:18px;font-size:12.5px;color:#555">10条/页</span><svg class="abs" style="left:80px;top:7px" width="11" height="8" viewBox="0 0 11 8"><path d="M1 1.5 L5.5 6 L10 1.5" stroke="#aaa" stroke-width="1" fill="none"/></svg></div>
<div class="pgb" style="left:1633px"><svg width="8" height="12" viewBox="0 0 8 12" style="margin-top:6px"><path d="M6 1.5 L2 6 L6 10.5" stroke="#c0c4cc" stroke-width="1.2" fill="none"/></svg></div>
<div class="pgb act" style="left:1665px">1</div>
<div class="pgb" style="left:1697px">2</div>
<div class="pgb" style="left:1729px"><svg width="8" height="12" viewBox="0 0 8 12" style="margin-top:6px"><path d="M2 1.5 L6 6 L2 10.5" stroke="#606266" stroke-width="1.2" fill="none"/></svg></div>
<div class="pg" style="left:1768px;top:787px">前往</div>
<div class="abs" style="left:1801px;top:783px;width:56px;height:24px;border:1px solid #dcdfe6;border-radius:3px;text-align:center;line-height:22px;font-size:13px;color:#555">1</div>
<div class="pg" style="left:1865px;top:787px">页</div>
</body>
</html>
